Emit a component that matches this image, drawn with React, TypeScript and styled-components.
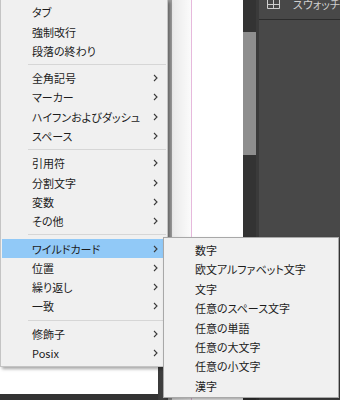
import React from "react";
import styled, { createGlobalStyle } from "styled-components";

const GlobalStyle = createGlobalStyle`
  html, body {
    margin: 0;
    padding: 0;
    background: #ffffff;
  }
  * {
    box-sizing: border-box;
  }
`;

const font = `"Noto Sans CJK JP", "Noto Sans", sans-serif`;

/* -------------------------------- backdrop -------------------------------- */
const Screen = styled.div`
  position: relative;
  width: 340px;
  height: 400px;
  overflow: hidden;
  display: flex;
  font-family: ${font};
`;

const LeftArea = styled.div`
  width: 168px;
  display: flex;
  flex-direction: column;
  background: #ffffff;
`;

const BottomBar = styled.div`
  margin-top: auto;
  height: 6px;
  background: #333333;
`;

const Pasteboard = styled.div`
  width: 11px;
  background: linear-gradient(to right, #3a3a3a, #474747);
`;

const PageEdge = styled.div`
  width: 4px;
  background: #9c9c9c;
`;

const Page = styled.div`
  width: 75px;
  display: flex;
  background: #ffffff;
`;

const PageGutter = styled.div`
  width: 20px;
  background: linear-gradient(to right, #e9e9e9, #fbfbfb);
  border-right: 1px solid #e6b9dc;
`;

const ScrollTrack = styled.div`
  width: 14px;
  display: flex;
  flex-direction: column;
  background: #333333;
  padding-top: 32px;
`;

const ScrollThumb = styled.div`
  height: 123px;
  background: #8e8e8e;
`;

const Panel = styled.div`
  flex: 1;
  display: flex;
  flex-direction: column;
  background: #484848;
  border-left: 3px solid #3a3a3a;
`;

const PanelHeader = styled.div`
  height: 20px;
  display: flex;
  align-items: flex-start;
  gap: 13px;
  padding-left: 8px;
  border-bottom: 1px solid #2c2c2c;
`;

const PanelTitle = styled.span`
  font-size: 11px;
  line-height: 9px;
  color: #cfcfcf;
  white-space: nowrap;
  font-feature-settings: "palt";
`;

/* ---------------------------------- menus --------------------------------- */
const MenuBox = styled.div<{ $left: number; $top: number; $width: number }>`
  position: absolute;
  left: ${(p) => p.$left}px;
  top: ${(p) => p.$top}px;
  width: ${(p) => p.$width}px;
  display: flex;
  flex-direction: column;
  background: #f0f0f0;
  border: 1px solid #c4c4c4;
  box-shadow: 2px 2px 3px rgba(0, 0, 0, 0.35);
`;

const MainMenu = styled(MenuBox)`
  padding: 2.6px 0 3px;
  border-top: none;
`;

const SubMenu = styled(MenuBox)`
  padding: 2.3px 0 2px;
  border-color: #a8a8a8;
  z-index: 2;
`;

const Item = styled.div<{ $active?: boolean; $indent: number; $h: number }>`
  height: ${(p) => p.$h}px;
  margin: 0 1px;
  padding-left: ${(p) => p.$indent}px;
  padding-right: 8px;
  display: flex;
  align-items: center;
  justify-content: space-between;
  background: ${(p) => (p.$active ? "#91c9f7" : "transparent")};
  font-size: 11px;
  color: #1c1c1c;
  white-space: nowrap;
  font-feature-settings: "palt";
`;

const Separator = styled.div`
  height: 1px;
  margin: 3.5px 1px 3.5px 27px;
  background: #d6d6d6;
`;

const Chevron = () => (
  <svg width="5" height="8" viewBox="0 0 5 8">
    <path d="M1 1 L4 4 L1 7" fill="none" stroke="#3a3a3a" strokeWidth="1.1" />
  </svg>
);

const GridIcon = () => (
  <svg width="13" height="9" viewBox="0 0 13 9">
    <path
      d="M0.5 -2 V8.5 H12.5 V-2 M6.5 -2 V8.5 M0.5 4.5 H12.5"
      fill="none"
      stroke="#cfcfcf"
      strokeWidth="1"
    />
  </svg>
);

type Entry = { label: string; sub?: boolean; active?: boolean } | "sep";

const mainItems: Entry[] = [
  { label: "タブ" },
  { label: "強制改行" },
  { label: "段落の終わり" },
  "sep",
  { label: "全角記号", sub: true },
  { label: "マーカー", sub: true },
  { label: "ハイフンおよびダッシュ", sub: true },
  { label: "スペース", sub: true },
  "sep",
  { label: "引用符", sub: true },
  { label: "分割文字", sub: true },
  { label: "変数", sub: true },
  { label: "その他", sub: true },
  "sep",
  { label: "ワイルドカード", sub: true, active: true },
  { label: "位置", sub: true },
  { label: "繰り返し", sub: true },
  { label: "一致", sub: true },
  "sep",
  { label: "修飾子", sub: true },
  { label: "Posix", sub: true },
];

const wildcardItems = [
  "数字",
  "欧文アルファベット文字",
  "文字",
  "任意のスペース文字",
  "任意の単語",
  "任意の大文字",
  "任意の小文字",
  "漢字",
];

export default function App() {
  return (
    <>
      <GlobalStyle />
      <Screen>
        <LeftArea>
          <BottomBar />
        </LeftArea>
        <Pasteboard />
        <PageEdge />
        <Page>
          <PageGutter />
        </Page>
        <ScrollTrack>
          <ScrollThumb />
        </ScrollTrack>
        <Panel>
          <PanelHeader>
            <GridIcon />
            <PanelTitle>スウォッチ</PanelTitle>
          </PanelHeader>
        </Panel>

        <MainMenu $left={0} $top={0} $width={168}>
          {mainItems.map((each, index) =>
            each === "sep" ? (
              <Separator key={index} />
            ) : (
              <Item key={index} $indent={30} $h={19.3} $active={each.active}>
                <span>{each.label}</span>
                {each.sub && <Chevron />}
              </Item>
            )
          )}
        </MainMenu>

        <SubMenu $left={163} $top={237} $width={176}>
          {wildcardItems.map((label) => (
            <Item key={label} $indent={30} $h={19.4}>
              <span>{label}</span>
            </Item>
          ))}
        </SubMenu>
      </Screen>
    </>
  );
}
